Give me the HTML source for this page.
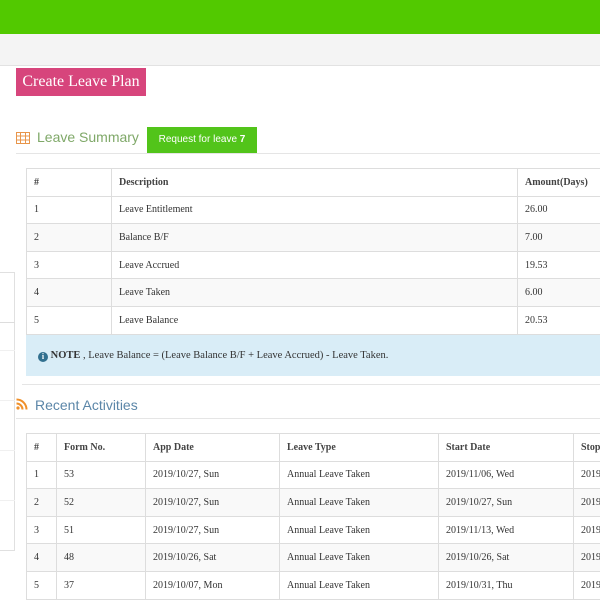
<!DOCTYPE html>
<html><head><style>
*{margin:0;padding:0;box-sizing:border-box}
body{width:600px;height:600px;overflow:hidden;background:#fff;position:relative;font-family:"Liberation Serif",serif;color:#333}
.abs{position:absolute}
table{border-collapse:collapse;position:absolute;font-size:10px;font-family:"Liberation Serif",serif}
td{border:1px solid #ddd;padding:0 7px;height:27.6px;color:#333}
tr:nth-child(odd) td{background:#f9f9f9}
tr.h td{font-weight:bold;color:#444;background:#fff}
</style></head><body>
<div class="abs" style="left:0;top:0;width:600px;height:34px;background:#52c900"></div>
<div class="abs" style="left:0;top:34px;width:600px;height:32px;background:#f4f4f4;border-bottom:1px solid #e2e2e2"></div>
<div class="abs" style="left:16px;top:68px;width:130px;height:28px;background:#d7457c;color:#fff;font-size:16px;line-height:28px;text-align:center">Create Leave Plan</div>
<div class="abs" style="left:-2px;top:272px;width:17px;height:279px;border:1px solid #e0e0e0;background:#fff"></div>
<div class="abs" style="left:0;top:322px;width:15px;border-top:1px solid #ddd"></div>
<div class="abs" style="left:0;top:350px;width:15px;border-top:1px solid #f0f0f0"></div>
<div class="abs" style="left:0;top:400px;width:15px;border-top:1px solid #f0f0f0"></div>
<div class="abs" style="left:0;top:450px;width:15px;border-top:1px solid #f0f0f0"></div>
<div class="abs" style="left:0;top:500px;width:15px;border-top:1px solid #f0f0f0"></div>
<svg class="abs" style="left:16px;top:132px" width="14" height="12" viewBox="0 0 14 12"><rect x="0.5" y="0.5" width="13" height="11" fill="none" stroke="#e8954a"/><path d="M0 4h14M0 8h14M4.5 0v12M9.5 0v12" stroke="#e8954a"/></svg>
<div class="abs" style="left:37px;top:129px;font-family:'Liberation Sans',sans-serif;font-size:14px;color:#7fa868">Leave Summary</div>
<div class="abs" style="left:147px;top:127px;width:110px;height:26px;background:#52c41a;color:#fff;font-family:'Liberation Sans',sans-serif;font-size:10px;line-height:26px;text-align:center">Request for leave <b>7</b></div>
<div class="abs" style="left:16px;top:153px;width:584px;border-top:1px solid #e5e5e5"></div>
<table style="left:26px;top:168px;width:600px">
<tr class="h"><td style="width:85px">#</td><td style="width:406px">Description</td><td>Amount(Days)</td></tr>
<tr><td>1</td><td>Leave Entitlement</td><td>26.00</td></tr>
<tr><td>2</td><td>Balance B/F</td><td>7.00</td></tr>
<tr><td>3</td><td>Leave Accrued</td><td>19.53</td></tr>
<tr><td>4</td><td>Leave Taken</td><td>6.00</td></tr>
<tr><td>5</td><td>Leave Balance</td><td>20.53</td></tr>
</table>
<div class="abs" style="left:26px;top:335px;width:580px;height:41px;background:#d9edf7;font-size:10.5px;line-height:41px;padding-left:12px;color:#333"><span style="display:inline-block;width:10px;height:10px;border-radius:50%;background:#31708f;color:#fff;font-size:8px;line-height:10px;text-align:center;font-weight:bold;vertical-align:-1px">i</span> <b>NOTE</b> , Leave Balance = (Leave Balance B/F + Leave Accrued) - Leave Taken.</div>
<div class="abs" style="left:22px;top:384px;width:578px;border-top:1px solid #e5e5e5"></div>
<svg class="abs" style="left:16px;top:398px" width="12" height="12" viewBox="0 0 12 12"><circle cx="2" cy="10" r="1.6" fill="#f0902a"/><path d="M0.5 5.5a6 6 0 0 1 6 6M0.5 1.5a10 10 0 0 1 10 10" stroke="#f0902a" stroke-width="2" fill="none"/></svg>
<div class="abs" style="left:35px;top:397px;font-family:'Liberation Sans',sans-serif;font-size:14px;color:#5b86a8">Recent Activities</div>
<div class="abs" style="left:16px;top:418px;width:584px;border-top:1px solid #e5e5e5"></div>
<table style="left:26px;top:433px;width:620px">
<tr class="h"><td style="width:30px">#</td><td style="width:89px">Form No.</td><td style="width:134px">App Date</td><td style="width:159px">Leave Type</td><td style="width:135px">Start Date</td><td>Stop</td></tr>
<tr><td>1</td><td>53</td><td>2019/10/27, Sun</td><td>Annual Leave Taken</td><td>2019/11/06, Wed</td><td>2019/</td></tr>
<tr><td>2</td><td>52</td><td>2019/10/27, Sun</td><td>Annual Leave Taken</td><td>2019/10/27, Sun</td><td>2019/</td></tr>
<tr><td>3</td><td>51</td><td>2019/10/27, Sun</td><td>Annual Leave Taken</td><td>2019/11/13, Wed</td><td>2019/</td></tr>
<tr><td>4</td><td>48</td><td>2019/10/26, Sat</td><td>Annual Leave Taken</td><td>2019/10/26, Sat</td><td>2019/</td></tr>
<tr><td>5</td><td>37</td><td>2019/10/07, Mon</td><td>Annual Leave Taken</td><td>2019/10/31, Thu</td><td>2019/</td></tr>
</table>
</body></html>
